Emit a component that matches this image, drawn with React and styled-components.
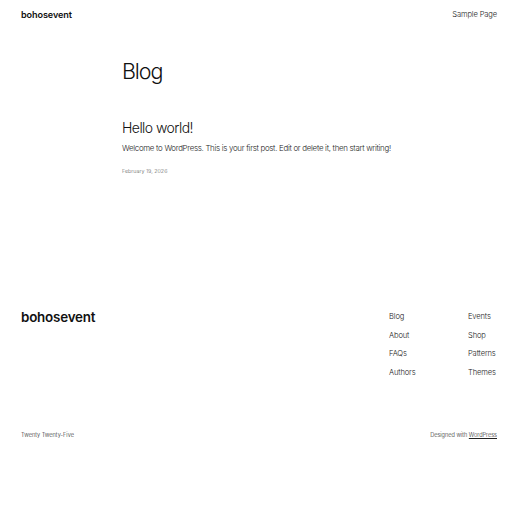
import React from "react";
import styled, { createGlobalStyle } from "styled-components";

const Global = createGlobalStyle`
  html, body { margin: 0; padding: 0; background: #fff; }
  body { font-family: Inter, "Noto Sans", sans-serif; color: #111; }
  * { box-sizing: border-box; }
  a { color: inherit; text-decoration: none; }
`;

const Page = styled.div`
  width: 512px;
  min-height: 512px;
  display: flex;
  flex-direction: column;
`;

const Header = styled.header`
  height: 30px;
  padding: 0 15px 0 21px;
  display: flex;
  align-items: center;
  justify-content: space-between;
`;

const SiteTitle = styled.a`
  font-size: ${(p) => p.$size}px;
  font-weight: 600;
  letter-spacing: ${(p) => p.$ls}px;
  color: #111;
  line-height: 1;
`;

const NavLink = styled.a`
  font-size: 7.6px;
  font-weight: 300;
  letter-spacing: -0.15px;
  color: #222;
  line-height: 1;
  white-space: nowrap;
`;

const Main = styled.main`
  width: 268px;
  margin: 0 auto;
  padding-top: 31px;
  height: 262px;
`;

const Title = styled.h1`
  margin: 0;
  font-size: 21.5px;
  font-weight: 300;
  letter-spacing: -1.1px;
  line-height: 1;
`;

const PostTitle = styled.h2`
  margin: 38px 0 0;
  font-size: 14px;
  font-weight: 300;
  letter-spacing: -0.55px;
  line-height: 1;
`;

const Excerpt = styled.p`
  margin: 10px 0 0;
  font-size: 7.9px;
  font-weight: 300;
  letter-spacing: -0.29px;
  line-height: 1;
  white-space: nowrap;
  color: #222;
`;

const PostDate = styled.div`
  margin-top: 16px;
  font-size: 5.4px;
  font-weight: 300;
  color: #666;
`;

const Footer = styled.footer`
  padding: 0 15px 0 21px;
`;

const FooterTop = styled.div`
  display: flex;
  justify-content: space-between;
  align-items: flex-start;
  padding-top: 19px;
`;

const FooterNav = styled.nav`
  display: grid;
  grid-template-columns: 79px auto;
  row-gap: 11px;
  width: 108px;
  padding-top: 2px;
`;

const FooterBottom = styled.div`
  display: flex;
  justify-content: space-between;
  margin-top: 56px;
  font-size: 5.6px;
  font-weight: 300;
  color: #222;
`;

const Credit = styled.span`
  a { text-decoration: underline; }
`;

const links = ["Blog", "Events", "About", "Shop", "FAQs", "Patterns", "Authors", "Themes"];

export default function App() {
  return (
    <Page>
      <Global />
      <Header>
        <SiteTitle $size={9.1} $ls={-0.1}>bohosevent</SiteTitle>
        <NavLink>Sample Page</NavLink>
      </Header>
      <Main>
        <Title>Blog</Title>
        <PostTitle>Hello world!</PostTitle>
        <Excerpt>Welcome to WordPress. This is your first post. Edit or delete it, then start writing!</Excerpt>
        <PostDate>February 19, 2026</PostDate>
      </Main>
      <Footer>
        <FooterTop>
          <SiteTitle $size={13.4} $ls={-0.2}>bohosevent</SiteTitle>
          <FooterNav>
            {links.map((l) => (
              <NavLink key={l}>{l}</NavLink>
            ))}
          </FooterNav>
        </FooterTop>
        <FooterBottom>
          <span>Twenty Twenty-Five</span>
          <Credit>Designed with <a>WordPress</a></Credit>
        </FooterBottom>
      </Footer>
    </Page>
  );
}
